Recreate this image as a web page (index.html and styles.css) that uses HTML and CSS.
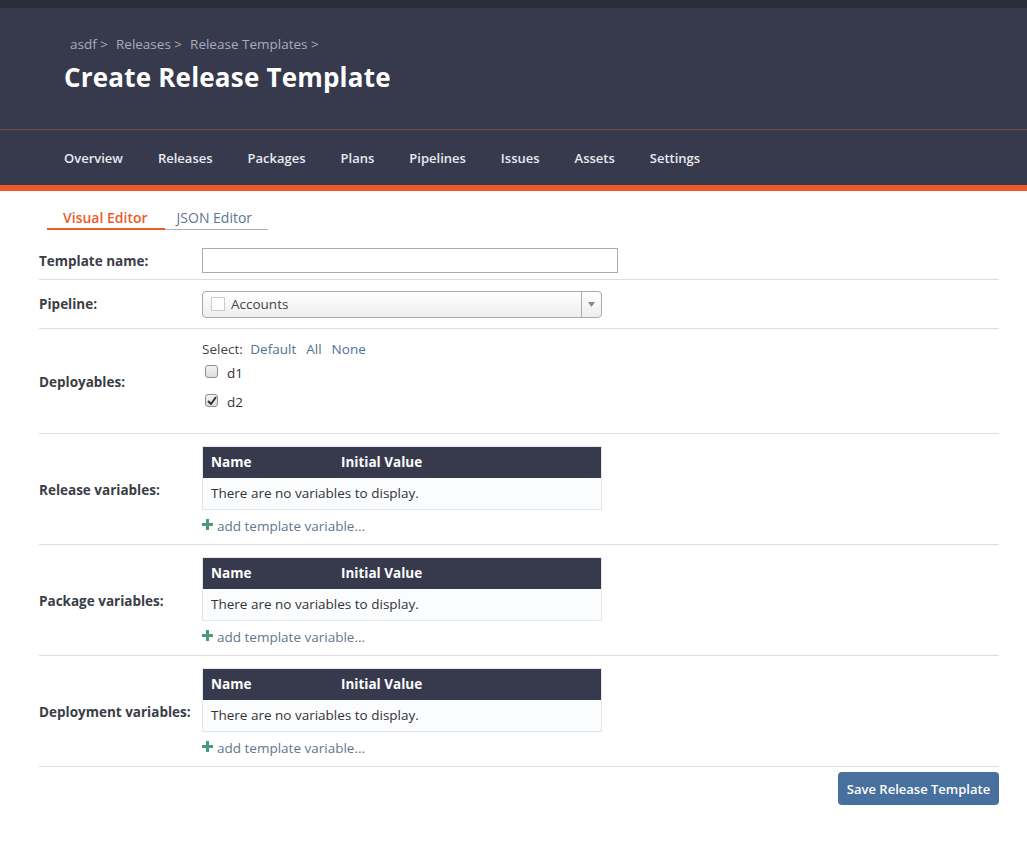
FILE: index.html
```html
<!DOCTYPE html>
<html>
<head>
<meta charset="utf-8">
<link rel="stylesheet" href="styles.css">
</head>
<body>
<div class="topstrip"></div>
<header class="header">
  <div class="crumbs"><span>asdf &gt;</span><span>Releases &gt;</span><span>Release Templates &gt;</span></div>
  <h1 class="title">Create Release Template</h1>
</header>
<nav class="nav">
  <a>Overview</a><a>Releases</a><a>Packages</a><a>Plans</a><a>Pipelines</a><a>Issues</a><a>Assets</a><a>Settings</a>
</nav>
<div class="orange"></div>
<main class="main">
  <div class="tabs">
    <div class="tab active">Visual Editor</div>
    <div class="tab">JSON Editor</div>
  </div>
  <div class="row r-name">
    <div class="label">Template name:</div>
    <div class="ctrl"><input class="text" type="text"></div>
  </div>
  <div class="row r-pipe">
    <div class="label">Pipeline:</div>
    <div class="ctrl">
      <div class="select"><span class="sq"></span><span class="sv">Accounts</span><span class="arrow"><svg width="7" height="5" viewBox="0 0 7 5"><path d="M0 0h7L3.5 5z" fill="#888"/></svg></span></div>
    </div>
  </div>
  <div class="row r-dep">
    <div class="label">Deployables:</div>
    <div class="ctrl">
      <div class="sel">Select: <a>Default</a><a>All</a><a>None</a></div>
      <div class="cb"><span class="box"></span>d1</div>
      <div class="cb"><span class="box on"><svg width="10" height="9" viewBox="0 0 10 9"><path d="M1 5l3 3 5-7" stroke="#333" stroke-width="2" fill="none"/></svg></span>d2</div>
    </div>
  </div>
  <div class="row r-var">
    <div class="label">Release variables:</div>
    <div class="ctrl">
      <div class="tbl"><div class="th"><span class="c1">Name</span><span>Initial Value</span></div><div class="td">There are no variables to display.</div></div>
      <div class="add"><svg class="plus" width="11" height="11" viewBox="0 0 11 11"><path d="M4 0h3v4h4v3H7v4H4V7H0V4h4z" fill="#4a9a7f"/></svg>add template variable...</div>
    </div>
  </div>
  <div class="row r-var">
    <div class="label">Package variables:</div>
    <div class="ctrl">
      <div class="tbl"><div class="th"><span class="c1">Name</span><span>Initial Value</span></div><div class="td">There are no variables to display.</div></div>
      <div class="add"><svg class="plus" width="11" height="11" viewBox="0 0 11 11"><path d="M4 0h3v4h4v3H7v4H4V7H0V4h4z" fill="#4a9a7f"/></svg>add template variable...</div>
    </div>
  </div>
  <div class="row r-var">
    <div class="label">Deployment variables:</div>
    <div class="ctrl">
      <div class="tbl"><div class="th"><span class="c1">Name</span><span>Initial Value</span></div><div class="td">There are no variables to display.</div></div>
      <div class="add"><svg class="plus" width="11" height="11" viewBox="0 0 11 11"><path d="M4 0h3v4h4v3H7v4H4V7H0V4h4z" fill="#4a9a7f"/></svg>add template variable...</div>
    </div>
  </div>
  <div class="actions"><button class="btn">Save Release Template</button></div>
</main>
</body>
</html>
```
FILE: styles.css
```css
* { box-sizing: border-box; }
body { margin: 0; font-family: "Open Sans", "Liberation Sans", sans-serif; color: #333; background: #fff; }
.topstrip { height: 8px; background: #2a2c39; }
.header { background: #373a4d; height: 122px; padding: 28px 0 0 64px; border-bottom: 1px solid #7b4a3c; }
.crumbs { font-size: 13.5px; color: #a8acba; padding-left: 6px; display: flex; gap: 8px; line-height: 16px; }
.title { margin: 7px 0 0; font-size: 26px; font-weight: 700; color: #fff; line-height: 36px; letter-spacing: 0.2px; }
.nav { background: #373a4d; height: 55px; display: flex; align-items: center; padding-left: 64px; gap: 35px; }
.nav a { color: #e8eaf0; font-size: 13px; font-weight: 600; }
.orange { height: 6px; background: #f05a28; }
.main { padding: 0 28px 0 39px; font-size: 13.5px; }
.tabs { display: flex; align-items: flex-end; margin-left: 8px; padding-top: 16px; }
.tab { font-size: 14px; line-height: 20px; padding: 1px 16px 1px 12px; color: #5d7590; border-bottom: 1px solid #a9b0bb; }
.tab.active { color: #f05a28; font-weight: 600; padding: 1px 17px 0 16px; border-bottom: 2px solid #f05a28; }
.row { display: flex; align-items: center; border-bottom: 1px solid #dcdde0; }
.label { width: 163px; font-size: 13.5px; font-weight: 700; color: #3a3d47; }
.ctrl { flex: 1; }
.r-name { height: 50px; padding-top: 12px; }
.text { width: 416px; height: 25px; border: 1px solid #aaa; margin: 0; padding: 0 4px; font: inherit; }
.r-pipe { height: 49px; }
.select { width: 400px; height: 27px; border: 1px solid #aaa; border-radius: 4px; background: linear-gradient(#fff, #eee); display: flex; align-items: center; padding-left: 8px; font-size: 13.5px; color: #444; }
.sq { width: 14px; height: 14px; border: 1px solid #ccc; background: #fff; margin-right: 6px; }
.sv { flex: 1; }
.arrow { width: 20px; height: 100%; border-left: 1px solid #aaa; display: flex; align-items: center; justify-content: center; }
.r-dep { height: 105px; padding-top: 6px; }
.r-dep .label { margin-top: -4px; }
.r-dep .ctrl { align-self: flex-start; padding-top: 5px; }
.sel { font-size: 13.5px; color: #444; line-height: 18px; margin-bottom: 4px; }
.sel a { color: #4f7296; margin-left: 4px; margin-right: 6px; }
.cb { display: flex; align-items: center; font-size: 13.5px; color: #333; height: 22px; margin-bottom: 7px; }
.box { width: 13px; height: 13px; border: 1px solid #8f8f8f; border-radius: 3px; background: linear-gradient(#f4f4f4, #dcdcdc); margin: -4px 9px 0 3px; display: flex; align-items: center; justify-content: center; }
.r-var { height: 111px; padding-top: 2px; }
.tbl { width: 400px; border: 1px solid #e3e6ea; }
.th { background: #373a4d; height: 31px; display: flex; align-items: center; padding-left: 8px; color: #fff; font-size: 13.5px; font-weight: 700; }
.c1 { width: 130px; }
.td { background: #fbfcfd; height: 31px; display: flex; align-items: center; padding-left: 8px; font-size: 13.5px; color: #333; }
.add { margin-top: 7px; font-size: 13.5px; color: #5f7891; display: flex; align-items: center; }
.plus { margin-right: 4px; margin-top: -2px; }
.actions { display: flex; justify-content: flex-end; padding-top: 5px; }
.btn { background: #48709e; color: #fff; border: 0; border-radius: 4px; height: 33px; width: 161px; font: inherit; font-size: 13px; font-weight: 600; }
```
